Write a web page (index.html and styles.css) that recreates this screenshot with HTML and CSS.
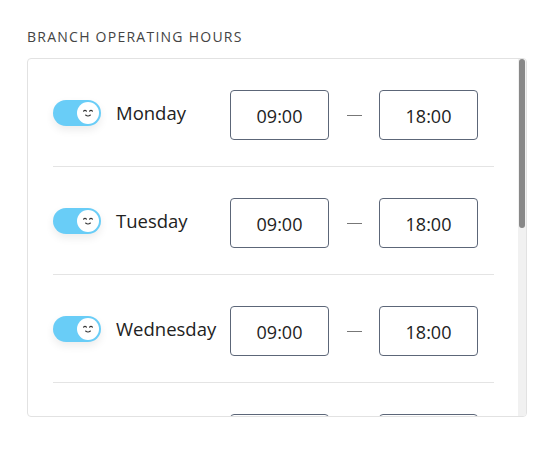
FILE: index.html
```html
<!DOCTYPE html>
<html lang="en">
<head>
<meta charset="utf-8">
<title>Branch Operating Hours</title>
<link rel="stylesheet" href="styles.css">
</head>
<body>
<section class="panel">
  <h2 class="title">BRANCH OPERATING HOURS</h2>
  <div class="list">
    <div class="rows">
      <div class="row">
        <span class="toggle"><span class="knob"><svg viewBox="0 0 22 22" width="22" height="22"><path d="M6.5 9.2 Q8 7.6 9.5 9.2 M12.5 9.2 Q14 7.6 15.5 9.2" fill="none" stroke="#333" stroke-width="1.1" stroke-linecap="round"/><path d="M8.6 13 Q11 15 13.4 13" fill="none" stroke="#333" stroke-width="1.1" stroke-linecap="round"/></svg></span></span>
        <span class="day">Monday</span>
        <span class="time">09:00</span><span class="dash"></span><span class="time">18:00</span>
      </div>
      <div class="row">
        <span class="toggle"><span class="knob"><svg viewBox="0 0 22 22" width="22" height="22"><path d="M6.5 9.2 Q8 7.6 9.5 9.2 M12.5 9.2 Q14 7.6 15.5 9.2" fill="none" stroke="#333" stroke-width="1.1" stroke-linecap="round"/><path d="M8.6 13 Q11 15 13.4 13" fill="none" stroke="#333" stroke-width="1.1" stroke-linecap="round"/></svg></span></span>
        <span class="day">Tuesday</span>
        <span class="time">09:00</span><span class="dash"></span><span class="time">18:00</span>
      </div>
      <div class="row">
        <span class="toggle"><span class="knob"><svg viewBox="0 0 22 22" width="22" height="22"><path d="M6.5 9.2 Q8 7.6 9.5 9.2 M12.5 9.2 Q14 7.6 15.5 9.2" fill="none" stroke="#333" stroke-width="1.1" stroke-linecap="round"/><path d="M8.6 13 Q11 15 13.4 13" fill="none" stroke="#333" stroke-width="1.1" stroke-linecap="round"/></svg></span></span>
        <span class="day">Wednesday</span>
        <span class="time">09:00</span><span class="dash"></span><span class="time">18:00</span>
      </div>
      <div class="row">
        <span class="toggle"><span class="knob"><svg viewBox="0 0 22 22" width="22" height="22"><path d="M6.5 9.2 Q8 7.6 9.5 9.2 M12.5 9.2 Q14 7.6 15.5 9.2" fill="none" stroke="#333" stroke-width="1.1" stroke-linecap="round"/><path d="M8.6 13 Q11 15 13.4 13" fill="none" stroke="#333" stroke-width="1.1" stroke-linecap="round"/></svg></span></span>
        <span class="day">Thursday</span>
        <span class="time">09:00</span><span class="dash"></span><span class="time">18:00</span>
      </div>
    </div>
    <div class="scrollbar"><div class="thumb"></div></div>
  </div>
</section>
</body>
</html>
```
FILE: styles.css
```css
html, body {
  margin: 0;
  padding: 0;
  background: #ffffff;
}
body {
  font-family: "Open Sans", "Noto Sans", "Liberation Sans", sans-serif;
  color: #222;
}
.panel {
  padding: 27px 27px 0 27px;
  width: 500px;
}
.title {
  margin: 0 0 11px 0;
  font-size: 14px;
  font-weight: 400;
  letter-spacing: 1.25px;
  color: #444;
  line-height: 20px;
  white-space: nowrap;
}
.list {
  position: relative;
  height: 357px;
  border: 1px solid #e2e2e2;
  border-radius: 4px;
  overflow: hidden;
}
.rows {
  padding-right: 8px;
}
.row {
  display: flex;
  align-items: center;
  margin: 0 24px 0 25px;
  padding: 31px 0 26px 0;
  border-bottom: 1px solid #e4e4e4;
}
.toggle {
  position: relative;
  display: block;
  flex: none;
  width: 48px;
  height: 26px;
  margin-bottom: 4px;
  border-radius: 13px;
  background: #69cdf7;
  box-shadow: 0 4px 9px rgba(0, 0, 0, 0.08);
}
.knob {
  position: absolute;
  right: 2px;
  top: 2px;
  width: 22px;
  height: 22px;
  border-radius: 50%;
  background: #fff;
  display: block;
}
.knob svg {
  display: block;
}
.day {
  flex: none;
  width: 114px;
  margin-left: 15px;
  margin-bottom: 5px;
  font-size: 18.5px;
  color: #222;
  white-space: nowrap;
}
.time {
  flex: none;
  box-sizing: border-box;
  width: 99px;
  height: 50px;
  border: 1px solid #5c6678;
  border-radius: 4px;
  display: flex;
  align-items: center;
  justify-content: center;
  font-size: 18px;
  color: #222;
  padding-top: 2px;
}
.dash {
  flex: none;
  width: 15px;
  height: 1px;
  background: #777;
  margin: 0 17px 0 18px;
}
.scrollbar {
  position: absolute;
  top: 0;
  right: 0;
  bottom: 0;
  width: 8px;
  background: #f1f1f1;
}
.thumb {
  margin: 0 1px;
  height: 169px;
  border-radius: 3px;
  background: #888;
}
```
